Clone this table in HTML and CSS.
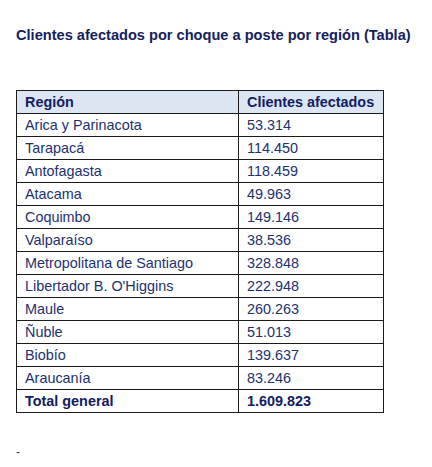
FILE: index.html
```html
<!DOCTYPE html>
<html lang="es">

<head>
    <meta charset="UTF-8">
    <meta name="viewport" content="width=device-width, initial-scale=1.0">
    <title>Clientes afectados por choque a poste</title>
    <link rel="stylesheet" href="styles.css">
</head>

<body>
    <div class="page">
        <h2 class="title">Clientes afectados por choque a poste por región (Tabla)</h2>

        <table class="data-table">
            <thead>
                <tr>
                    <th class="col-region">Región</th>
                    <th class="col-value">Clientes afectados</th>
                </tr>
            </thead>
            <tbody>
                <tr><td>Arica y Parinacota</td><td>53.314</td></tr>
                <tr><td>Tarapacá</td><td>114.450</td></tr>
                <tr><td>Antofagasta</td><td>118.459</td></tr>
                <tr><td>Atacama</td><td>49.963</td></tr>
                <tr><td>Coquimbo</td><td>149.146</td></tr>
                <tr><td>Valparaíso</td><td>38.536</td></tr>
                <tr><td>Metropolitana de Santiago</td><td>328.848</td></tr>
                <tr><td>Libertador B. O'Higgins</td><td>222.948</td></tr>
                <tr><td>Maule</td><td>260.263</td></tr>
                <tr><td>Ñuble</td><td>51.013</td></tr>
                <tr><td>Biobío</td><td>139.637</td></tr>
                <tr><td>Araucanía</td><td>83.246</td></tr>
            </tbody>
            <tfoot>
                <tr class="total-row"><td>Total general</td><td>1.609.823</td></tr>
            </tfoot>
        </table>

        <p class="footnote">-</p>
    </div>
</body>

</html>
```

FILE: styles.css
```css
body {
    margin: 0;
    background: #ffffff;
    font-family: "Liberation Sans", Arial, sans-serif;
    color: #22306f;
}

.page {
    padding: 27px 16px 0 16px;
}

.title {
    margin: 0 0 47px 0;
    font-size: 14.6px;
    font-weight: bold;
    line-height: 16px;
    color: #14215e;
}

.data-table {
    border-collapse: collapse;
    width: 368px;
    font-size: 14.4px;
}

.data-table th,
.data-table td {
    height: 22px;
    padding: 0 8px;
    border: 1px solid #1a1a1a;
    text-align: left;
    line-height: 16px;
}

.data-table th {
    background-color: #dce6f2;
    font-weight: bold;
    color: #12205f;
}

.col-region {
    width: 205px;
}

.total-row td {
    font-weight: bold;
    color: #12205f;
}

.footnote {
    margin: 32px 0 0 0;
    font-size: 12px;
    color: #22306f;
}
```
